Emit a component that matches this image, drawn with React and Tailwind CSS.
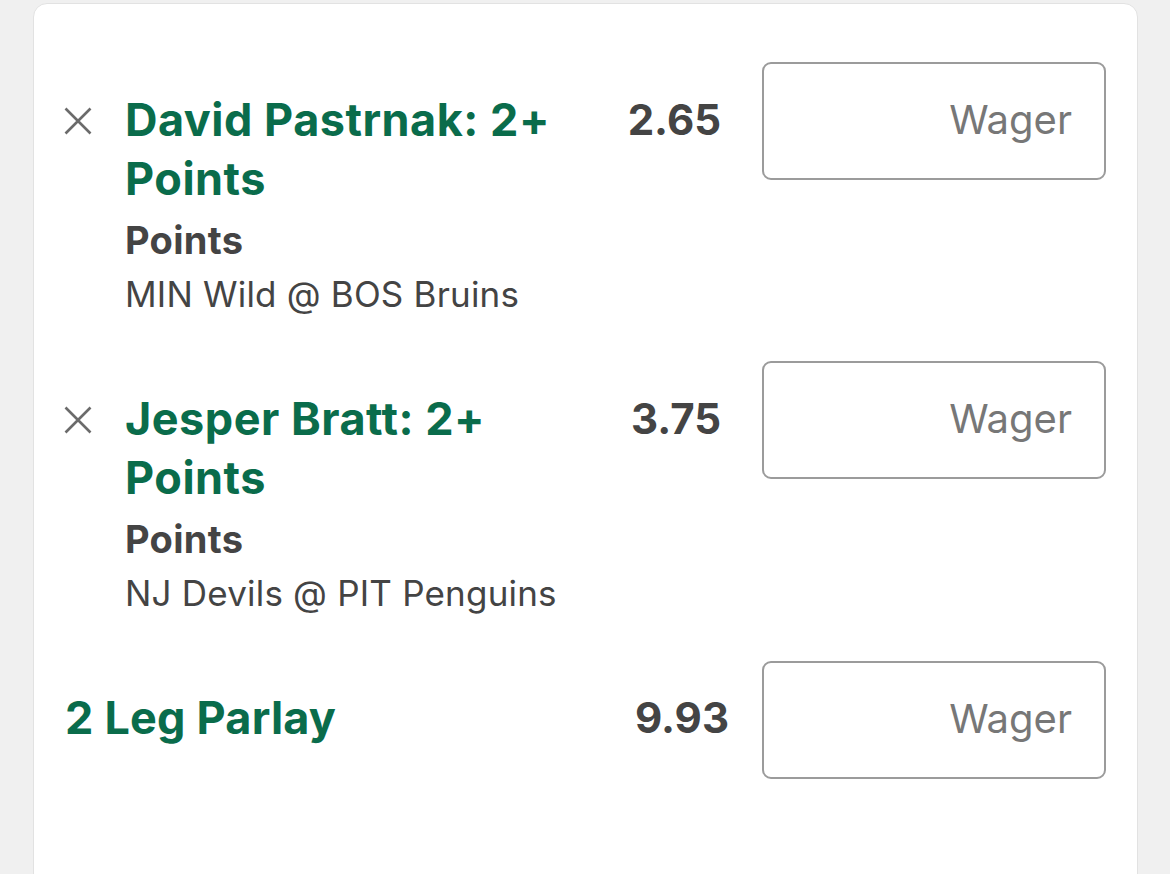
import React from 'react';

const legs = [
    { player: 'David Pastrnak: 2+ Points', market: 'Points', game: 'MIN Wild @ BOS Bruins', odds: '2.65' },
    { player: 'Jesper Bratt: 2+ Points', market: 'Points', game: 'NJ Devils @ PIT Penguins', odds: '3.75' },
];

function CloseIcon() {
    return (
        <svg width="28" height="28" viewBox="0 0 28 28" className="block">
            <path d="M1.5 1.5 L26.5 26.5 M26.5 1.5 L1.5 26.5" stroke="#6b6b6b" strokeWidth="2.6" strokeLinecap="butt" fill="none" />
        </svg>
    );
}

function WagerBox() {
    return (
        <div className="w-[344px] h-[118px] shrink-0 border-2 border-[#9b9b9b] rounded-[9px] flex items-center justify-end pr-[32px]">
            <span className="text-[40px] leading-none text-[#777777] pb-[2px]">Wager</span>
        </div>
    );
}

function LegRow({ leg }) {
    return (
        <div className="flex items-start">
            <button className="mt-[45px] shrink-0" title="Remove leg"><CloseIcon /></button>
            <div className="ml-[33px] flex-1 min-w-0 pr-[18px]">
                <div className="mt-[28px] text-[45px] leading-[59px] tracking-[0.5px] font-bold text-[#0a6c4b]">{leg.player}</div>
                <div className="mt-[8px] text-[38px] leading-[48px] tracking-[0.3px] font-bold text-[#444444]">{leg.market}</div>
                <div className="mt-[8px] text-[35px] leading-[44px] tracking-[0.2px] text-[#444444]">{leg.game}</div>
            </div>
            <div className="mt-[29px] w-[132px] text-right text-[42px] leading-[58px] font-bold text-[#444444]">{leg.odds}</div>
            <div className="ml-[41px]"><WagerBox /></div>
        </div>
    );
}

export default function App() {
    return (
        <div className="min-h-screen bg-[#f0f0f0] pl-[33px] pr-[32px] pt-[3px] overflow-hidden" style={{ fontFamily: 'Inter, "Noto Sans", sans-serif' }}>
            <div className="bg-white rounded-t-[14px] border border-[#e2e2e2] h-[900px] pl-[30px] pr-[31px] pt-[58px]">
                <div className="flex flex-col gap-[45px]">
                    {legs.map(leg => <LegRow key={leg.player} leg={leg} />)}
                    <div className="flex items-start mt-[1px]">
                        <div className="flex-1 mt-[27px] pl-[1px] text-[45px] leading-[59px] tracking-[0.2px] font-bold text-[#0a6c4b]">2 Leg Parlay</div>
                        <div className="mt-[28px] text-right text-[42px] leading-[58px] font-bold text-[#444444]">9.93</div>
                        <div className="ml-[33px]"><WagerBox /></div>
                    </div>
                </div>
            </div>
        </div>
    );
}
